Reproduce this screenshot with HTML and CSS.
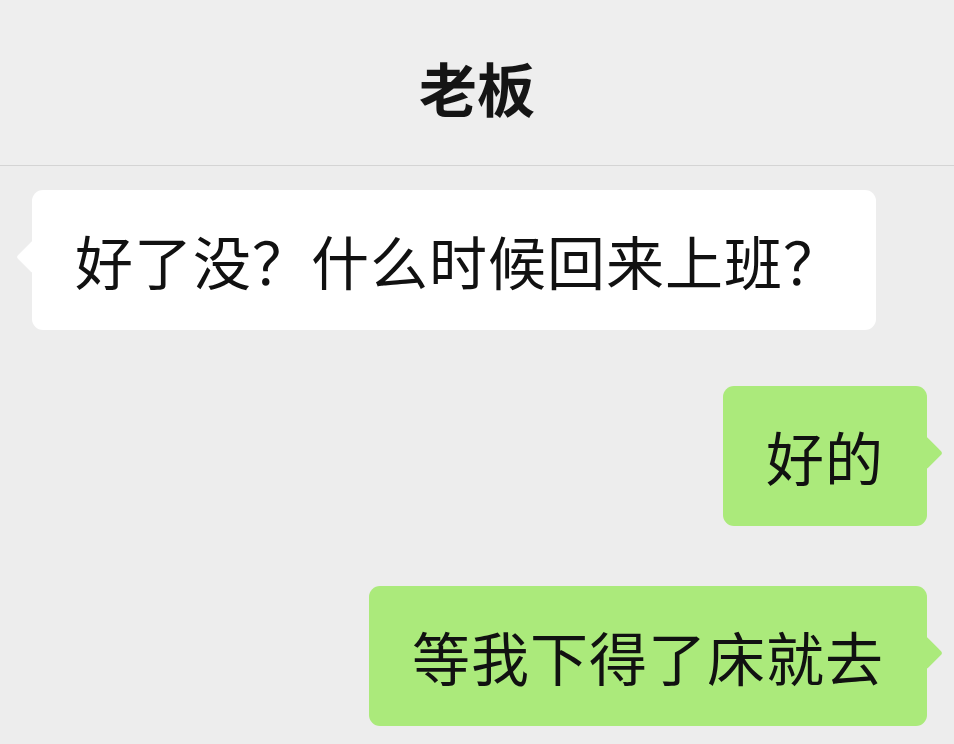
FILE: index.html
```html
<!DOCTYPE html>
<html lang="zh-CN">
<head>
  <meta charset="UTF-8">
  <title>老板</title>
  <link rel="stylesheet" href="styles.css">
</head>
<body>

  <div class="chat">
    <div class="chat-header">
      <h1 class="chat-title">老板</h1>
    </div>

    <div class="messages">
      <div class="row row-left">
        <div class="bubble bubble-in">好了没？什么时候回来上班？</div>
      </div>
      <div class="row row-right">
        <div class="bubble bubble-out">好的</div>
      </div>
      <div class="row row-right">
        <div class="bubble bubble-out">等我下得了床就去</div>
      </div>
    </div>
  </div>

</body>
</html>
```

FILE: styles.css
```css
body {
  margin: 0;
  padding: 0;
  background-color: #ededed;
  font-family: "Noto Sans CJK SC", "Noto Sans", sans-serif;
  color: #111;
}
.chat {
  width: 954px;
  height: 744px;
  overflow: hidden;
}
.chat-header {
  height: 165px;
  border-bottom: 1px solid #d4d4d4;
  background-color: #eeeeee;
  display: flex;
  justify-content: center;
  align-items: center;
}
.chat-title {
  margin: 9px 0 0 0;
  font-size: 58px;
  font-weight: 700;
  line-height: 1;
  color: #151515;
}
.messages {
  padding: 24px 27px 0 32px;
  display: flex;
  flex-direction: column;
}
.row {
  display: flex;
}
.row + .row {
  margin-top: 56px;
}
.row-right + .row-right {
  margin-top: 60px;
}
.row-left {
  justify-content: flex-start;
}
.row-right {
  justify-content: flex-end;
}
.bubble {
  position: relative;
  font-size: 58px;
  line-height: 58px;
  letter-spacing: 1px;
  padding: 41px 43px;
  border-radius: 11px;
  white-space: nowrap;
}
.bubble::before {
  content: "";
  position: absolute;
  top: 55px;
  width: 24px;
  height: 24px;
  border-radius: 3px;
  transform: rotate(45deg);
}
.bubble-in {
  padding-right: 34px;
  background-color: #ffffff;
}
.bubble-in::before {
  left: -11px;
  background-color: #ffffff;
}
.bubble-out {
  background-color: #abea7b;
}
.bubble-out::before {
  right: -11px;
  background-color: #abea7b;
}
```
